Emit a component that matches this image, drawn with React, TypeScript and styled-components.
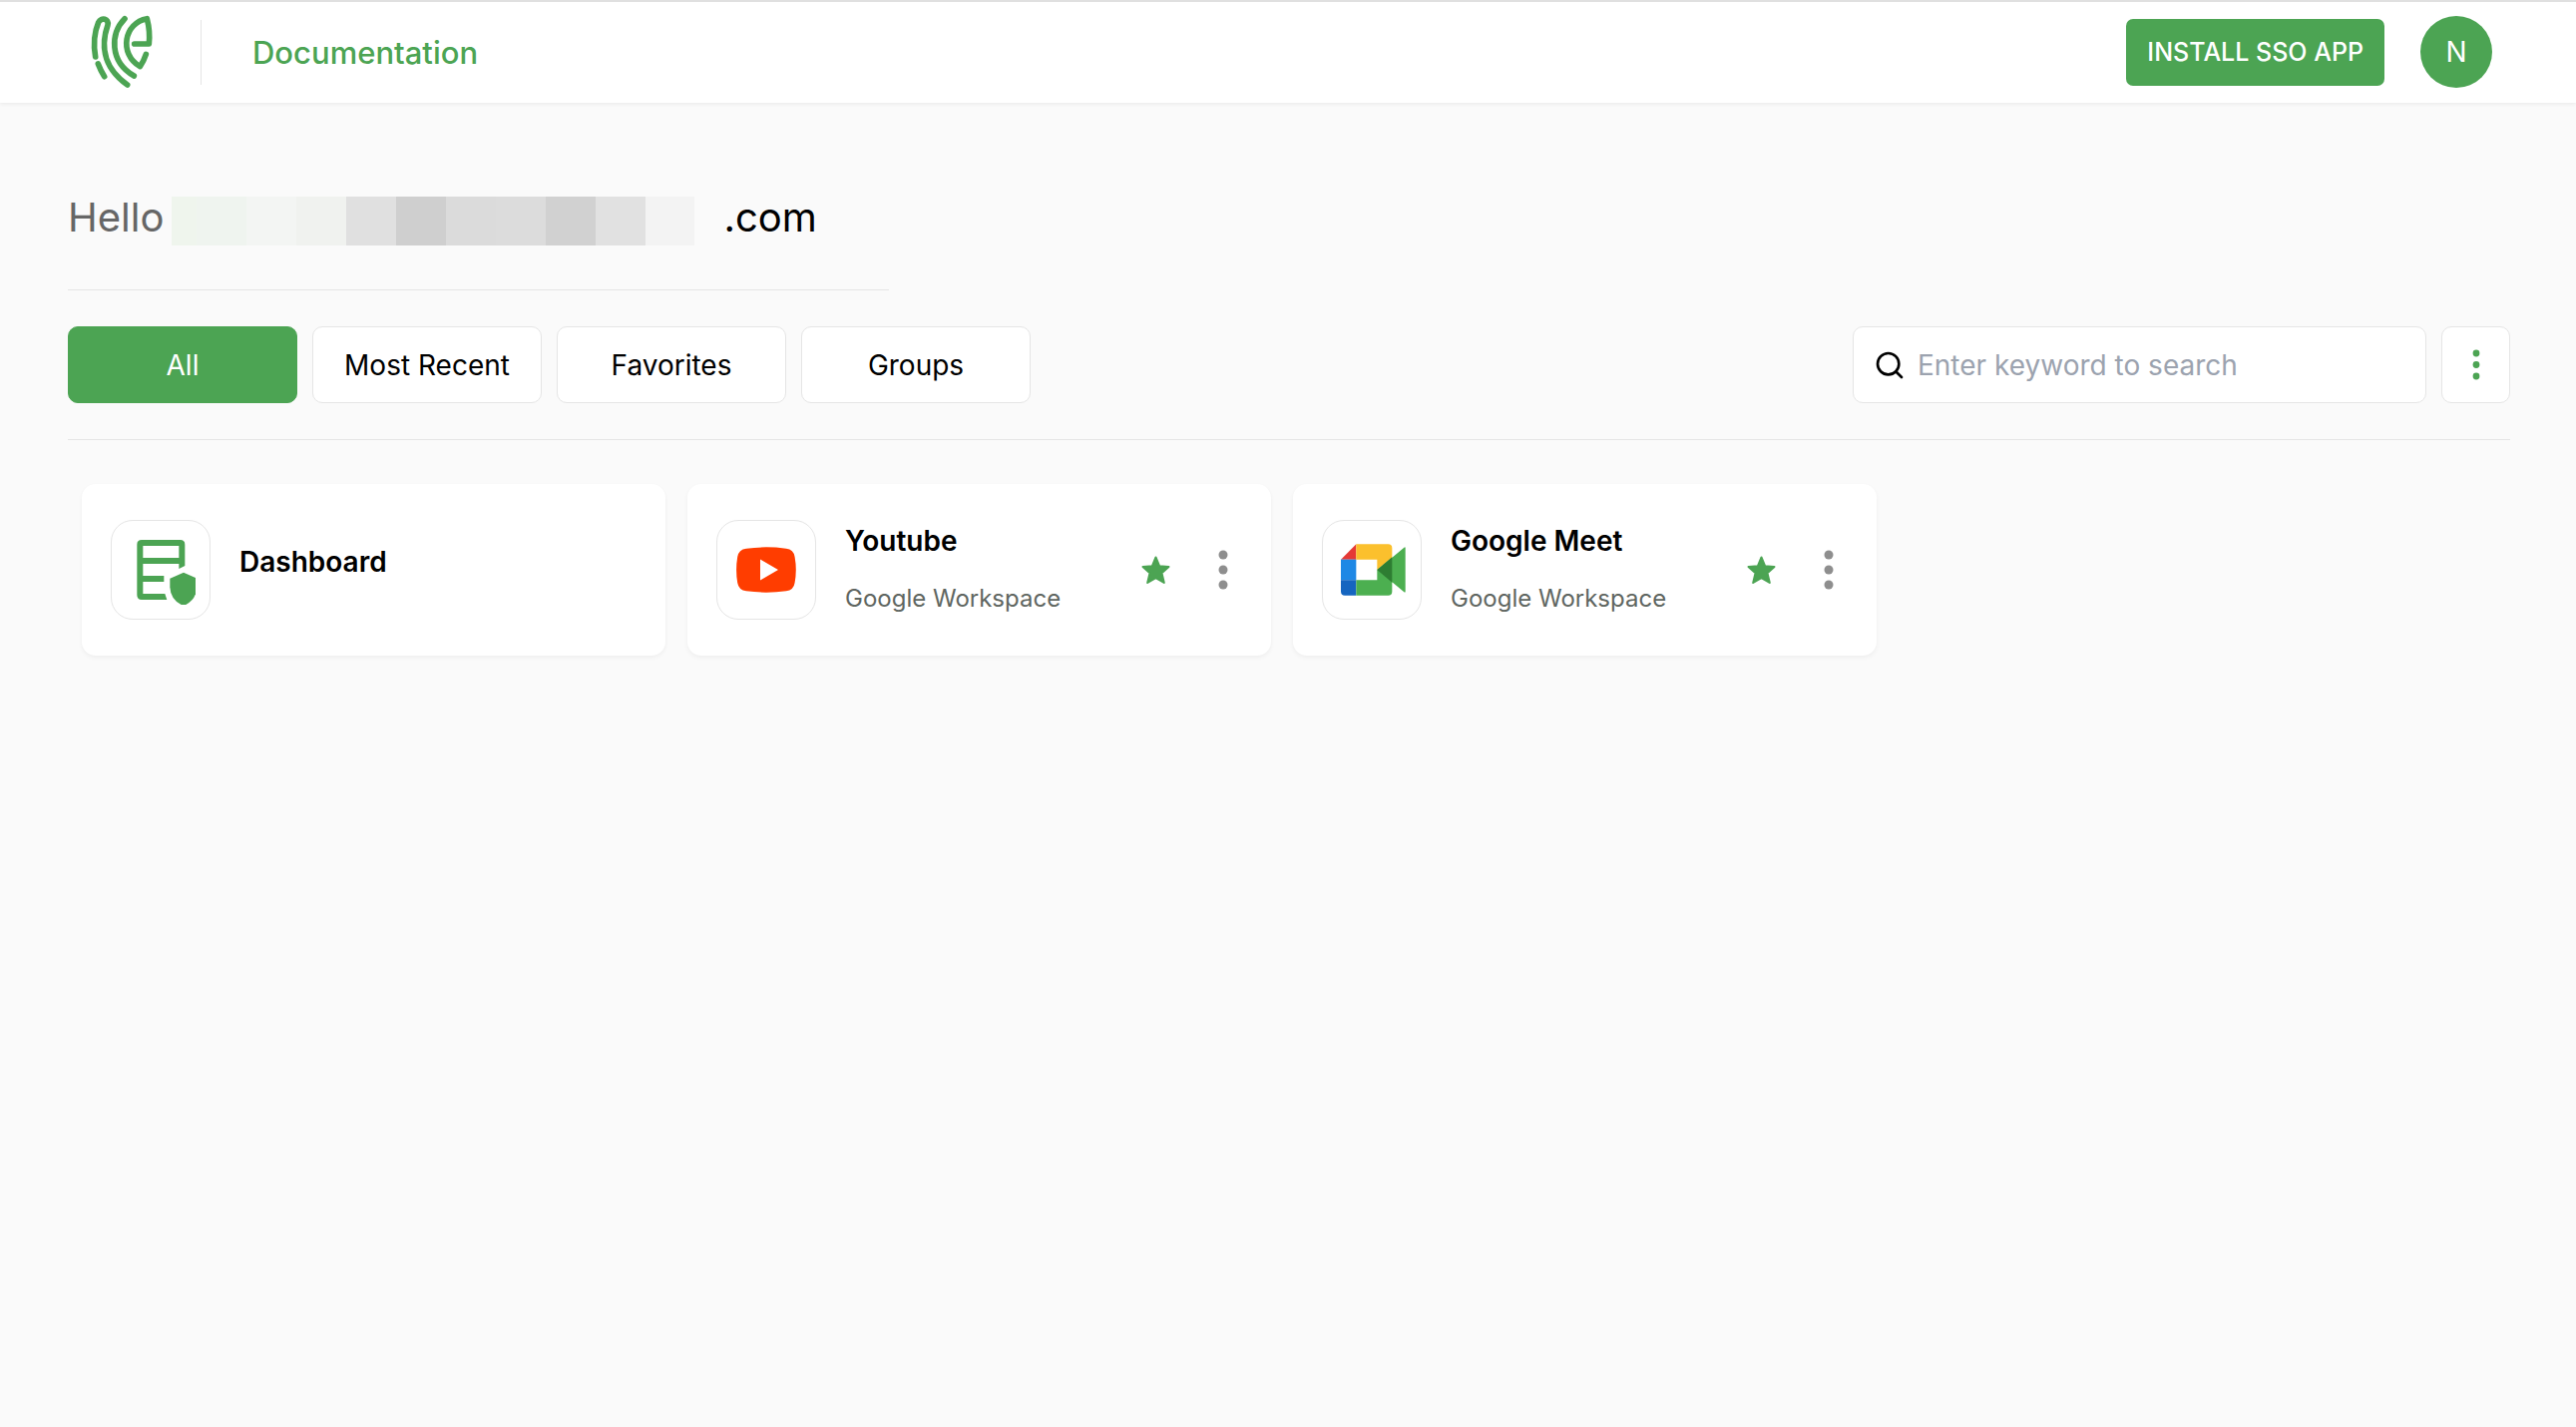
import React, { useState } from "react";
import styled, { createGlobalStyle, css } from "styled-components";
import { Search } from "lucide-react";

const green = "#4ca453";
const line = "#e5e5e5";

const GlobalStyle = createGlobalStyle`
  *, *::before, *::after { box-sizing: border-box; }
  body {
    margin: 0;
    background: #fafafa;
    color: #000;
    font-family: Inter, "Liberation Sans", Arial, sans-serif;
    font-size: 28px;
  }
  button, input { font: inherit; color: inherit; }
  button { cursor: pointer; border: 0; padding: 0; background: none; }
  h1, h2, p, ul { margin: 0; padding: 0; font-weight: 400; }
  svg { display: block; flex: none; }
`;

const Header = styled.header`
  display: flex;
  align-items: center;
  height: 103px;
  padding: 0 84px 1px 88px;
  border-top: 2px solid #e0e0e0;
  background: #fff;
  box-shadow: 0 1px 4px rgba(0, 0, 0, 0.08);
`;

const LogoLink = styled.a`
  padding-right: 43px;
`;

const DocsLink = styled.a`
  padding-left: 51px;
  border-left: 1px solid ${line};
  line-height: 65px;
  font-size: 31px;
  font-weight: 500;
  color: ${green};
  text-decoration: none;
`;

const HeaderActions = styled.div`
  display: flex;
  align-items: center;
  gap: 36px;
  margin-left: auto;
`;

const InstallButton = styled.button`
  height: 67px;
  padding: 0 21px;
  border-radius: 7px;
  background: ${green};
  color: #fff;
  font-size: 25px;
  font-weight: 500;
`;

const Avatar = styled.button`
  width: 72px;
  height: 72px;
  border-radius: 50%;
  background: ${green};
  color: #fff;
  font-size: 28px;
`;

const Main = styled.main`
  padding: 85px 66px 44px 68px;
`;

const Greeting = styled.h1`
  display: flex;
  align-items: center;
  width: fit-content;
  padding: 0 72px 42px 0;
  border-bottom: 1px solid ${line};
  font-size: 40px;
  line-height: 60px;
  color: #666;
`;

const Mosaic = styled.span`
  display: flex;
  width: 524px;
  height: 49px;
  margin: 6px 29px 0 8px;
`;

const MosaicCell = styled.span<{ $tone: string; $half?: boolean }>`
  flex: ${(p) => (p.$half ? 1 : 2)};
  background: ${(p) => p.$tone};
`;

const Domain = styled.span`
  color: #000;
`;

const Toolbar = styled.div`
  display: flex;
  justify-content: space-between;
  gap: 15px;
  padding: 36px 0;
  border-bottom: 1px solid ${line};
`;

const Group = styled.div`
  display: flex;
  gap: 15px;
`;

const box = css`
  height: 77px;
  border: 1px solid ${line};
  border-radius: 10px;
  background: #fff;
`;

const FilterButton = styled.button<{ $active: boolean }>`
  ${box}
  width: 230px;
  ${(p) =>
    p.$active &&
    css`
      border-color: ${green};
      background: ${green};
      color: #fff;
    `}
`;

const SearchField = styled.label`
  ${box}
  display: flex;
  align-items: center;
  gap: 12px;
  width: 575px;
  padding: 0 20px;
`;

const SearchInput = styled.input`
  flex: 1;
  min-width: 0;
  padding: 0;
  border: 0;
  outline: 0;
  background: none;
  &::placeholder {
    color: #9ca3af;
    opacity: 1;
  }
`;

const MoreButton = styled.button`
  ${box}
  display: grid;
  place-items: center;
  width: 69px;
  color: ${green};
`;

const AppGrid = styled.ul`
  display: grid;
  grid-template-columns: repeat(4, 1fr);
  gap: 22px;
  padding: 44px 28px 0 14px;
  list-style: none;
`;

const Card = styled.li`
  display: flex;
  align-items: center;
  gap: 29px;
  padding: 36px 33px 36px 29px;
  border-radius: 14px;
  background: #fff;
  box-shadow: 0 2px 4px rgba(0, 0, 0, 0.05);
`;

const Tile = styled.div`
  display: grid;
  place-items: center;
  width: 100px;
  height: 100px;
  border: 1px solid ${line};
  border-radius: 22px;
`;

const CardText = styled.div`
  flex: 1;
`;

const CardTitle = styled.h2`
  margin-bottom: 16px;
  font-size: 28px;
  line-height: 42px;
  font-weight: 600;
`;

const CardSource = styled.p`
  font-size: 24px;
  line-height: 42px;
  color: #5f6661;
`;

const CardActions = styled.div`
  display: flex;
  align-items: center;
  gap: 38px;
`;

const StarButton = styled.button`
  color: ${green};
`;

const DotsButton = styled.button`
  color: #8e8e8e;
`;

const Logo = () => (
  <svg width="70" height="80" viewBox="12 12 210 240" fill="none" stroke={green} strokeWidth="17" strokeLinecap="round" strokeLinejoin="round">
    <path d="M35 147C29 112 31 74 44 43C52 26 77 33 72 51C54 103 51 174 131 231" />
    <path d="M43 168Q50 187 62 206" />
    <path d="M123 32C80 76 76 161 151 204" />
    <path d="M152 108H196Q200 70 190 32C121 44 104 138 169 176Q180 160 187 139" />
  </svg>
);

const DashboardIcon = () => (
  <svg width="70" height="70" viewBox="56 54 210 210" fill={green}>
    <path
      fillRule="evenodd"
      d="M104 69H220Q234 69 234 83V147L216 156V141H108V177H171V195H108V231H174L180 249H104Q90 249 90 235V83Q90 69 104 69ZM108 87V123H216V87Z"
    />
    <path d="M230 167L270 185V211Q268 252 230 267Q191 252 189 211V185Z" />
  </svg>
);

const YoutubeIcon = () => (
  <svg width="60" height="46" viewBox="0 0 60 46">
    <path fill="#ff3d00" d="M10 1.7Q30-1 50 1.7Q57.500 2.500 58.600 10Q61 23 58.600 36Q57.500 43.500 50 44.300Q30 47 10 44.300Q2.500 43.500 1.200 36Q-1 23 1.200 10Q2.500 2.500 10 1.700Z" />
    <path fill="#fff" d="M24 12.500L42 23L24 33.500Z" />
  </svg>
);

const MeetIcon = () => (
  <svg width="70" height="70" viewBox="58 54 210 210">
    <path fill="#e53935" d="M116 82V128H70Z" />
    <path fill="#1e88e5" d="M70 128H116V190H70Z" />
    <path fill="#1565c0" d="M70 190H116V236H82Q70 236 70 224Z" />
    <path fill="#fbc02d" d="M116 82H212Q224 82 224 94V122L179 159V128H116Z" />
    <path fill="#4caf50" d="M116 190H179V159L224 122L260 92Q264 89 264 94V224Q264 228 260 226L224 196V224Q224 236 212 236H116Z" />
    <path fill="#2e7d32" d="M179 159L224 121V197Z" />
  </svg>
);

const StarIcon = () => (
  <svg width="29" height="29" viewBox="0 0 29 29" fill="currentColor" stroke="currentColor" strokeWidth="2" strokeLinejoin="round">
    <path d="M14.500 1.500L18.200 10.300L27.500 11L20.500 17.200L22.800 27L14.500 22.200L6.200 27L8.500 17.200L1.500 11L10.800 10.300Z" />
  </svg>
);

const CardDots = () => (
  <svg width="30" height="40" viewBox="0 0 30 40" fill="currentColor">
    <circle cx="15" cy="5" r="4.500" />
    <circle cx="15" cy="20" r="4.500" />
    <circle cx="15" cy="35" r="4.500" />
  </svg>
);

const ToolbarDots = () => (
  <svg width="30" height="32" viewBox="0 0 30 32" fill="currentColor">
    <circle cx="15" cy="4" r="3.400" />
    <circle cx="15" cy="15.500" r="3.400" />
    <circle cx="15" cy="27" r="3.400" />
  </svg>
);

const mosaicTones = ["#eff4ef", "#f3f5f3", "#f0f2ef", "#e0e0e0", "#cfcfcf", "#dbdbdb", "#dcdcdc", "#d1d1d1", "#e1e1e1", "#f3f3f3"];

const filters = ["All", "Most Recent", "Favorites", "Groups"];

const apps = [
  { title: "Dashboard", Icon: DashboardIcon },
  { title: "Youtube", source: "Google Workspace", Icon: YoutubeIcon },
  { title: "Google Meet", source: "Google Workspace", Icon: MeetIcon },
];

export default function App() {
  const [active, setActive] = useState("All");

  return (
    <>
      <GlobalStyle />
      <Header>
        <LogoLink href="#" aria-label="Home">
          <Logo />
        </LogoLink>
        <DocsLink href="#docs">Documentation</DocsLink>
        <HeaderActions>
          <InstallButton type="button">INSTALL SSO APP</InstallButton>
          <Avatar type="button">N</Avatar>
        </HeaderActions>
      </Header>
      <Main>
        <Greeting>
          Hello
          <Mosaic aria-hidden="true">
            <MosaicCell $tone="#eff5ed" $half />
            {mosaicTones.map((tone) => (
              <MosaicCell key={tone} $tone={tone} />
            ))}
          </Mosaic>
          <Domain>.com</Domain>
        </Greeting>
        <Toolbar>
          <Group>
            {filters.map((name) => (
              <FilterButton key={name} type="button" $active={name === active} onClick={() => setActive(name)}>
                {name}
              </FilterButton>
            ))}
          </Group>
          <Group>
            <SearchField>
              <Search size={32} aria-hidden="true" />
              <SearchInput type="search" aria-label="Search" placeholder="Enter keyword to search" />
            </SearchField>
            <MoreButton type="button" aria-label="More options">
              <ToolbarDots />
            </MoreButton>
          </Group>
        </Toolbar>
        <AppGrid>
          {apps.map(({ title, source, Icon }) => (
            <Card key={title}>
              <Tile>
                <Icon />
              </Tile>
              <CardText>
                <CardTitle>{title}</CardTitle>
                {source && <CardSource>{source}</CardSource>}
              </CardText>
              {source && (
                <CardActions>
                  <StarButton type="button" aria-label={`Favorite ${title}`}>
                    <StarIcon />
                  </StarButton>
                  <DotsButton type="button" aria-label={`${title} options`}>
                    <CardDots />
                  </DotsButton>
                </CardActions>
              )}
            </Card>
          ))}
        </AppGrid>
      </Main>
    </>
  );
}
